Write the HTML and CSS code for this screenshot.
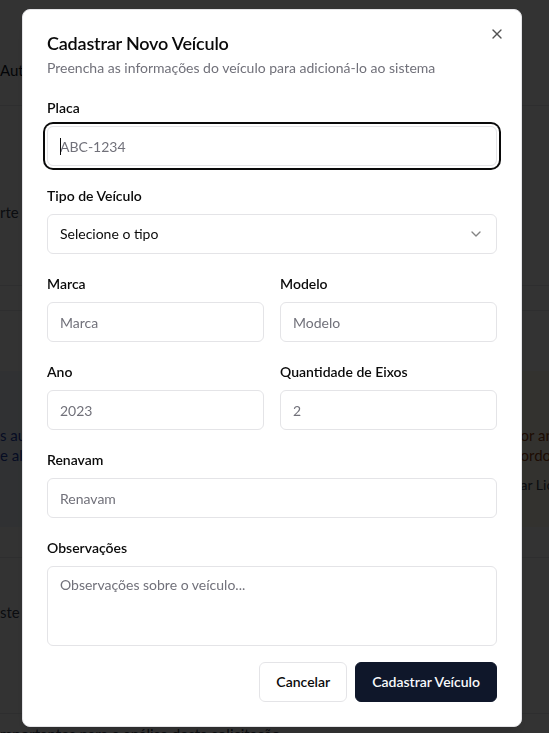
FILE: index.html
```html
<!DOCTYPE html>
<html lang="pt-BR">
<head>
<meta charset="utf-8">
<title>Cadastrar Novo Veículo</title>
<link rel="stylesheet" href="styles.css">
</head>
<body>
<div class="page">
  <div class="bg-top"><span class="bg-title">Autorização Especial de Trânsito</span></div>
  <div class="bg-block"><p class="bg-text">rte de carga indivisível em rodovias federais e estaduais</p></div>
  <div class="bg-strip"></div>
  <div class="bg-alerts">
    <div class="alert alert-blue">
      <p>s autorizações especiais são emitidas pelo órgão</p>
      <p>e alterações no cadastro do veículo</p>
    </div>
    <div class="alert alert-amber">
      <p>or análise técnica</p>
      <p>ordo com as normas</p>
      <p class="alert-link">ar Licença</p>
    </div>
  </div>
  <div class="bg-block2"><p class="bg-text">ste pedido será analisado pela equipe técnica</p></div>
  <div class="bg-foot"><p class="bg-text">mportantes para a análise desta solicitação</p></div>
</div>

<div class="overlay"></div>

<div class="dialog" role="dialog" aria-labelledby="dlg-title">
  <button class="close" type="button" aria-label="Fechar">
    <svg viewBox="0 0 24 24" width="16" height="16" fill="none" stroke="currentColor" stroke-width="2" stroke-linecap="round" stroke-linejoin="round"><path d="M18 6 6 18"/><path d="m6 6 12 12"/></svg>
  </button>
  <div class="dlg-head">
    <h2 id="dlg-title" class="dlg-title">Cadastrar Novo Veículo</h2>
    <p class="dlg-desc">Preencha as informações do veículo para adicioná-lo ao sistema</p>
  </div>
  <form class="form">
    <div class="fields">
      <div class="field">
        <label class="label" for="placa">Placa</label>
        <div class="input-wrap has-caret">
          <input id="placa" class="input is-focus" placeholder="ABC-1234">
        </div>
      </div>
      <div class="field">
        <label class="label">Tipo de Veículo</label>
        <button type="button" class="input select">
          <span>Selecione o tipo</span>
          <svg class="chev" viewBox="0 0 24 24" width="16" height="16" fill="none" stroke="currentColor" stroke-width="2" stroke-linecap="round" stroke-linejoin="round"><path d="m6 9 6 6 6-6"/></svg>
        </button>
      </div>
      <div class="row">
        <div class="field">
          <label class="label" for="marca">Marca</label>
          <input id="marca" class="input" placeholder="Marca">
        </div>
        <div class="field">
          <label class="label" for="modelo">Modelo</label>
          <input id="modelo" class="input" placeholder="Modelo">
        </div>
      </div>
      <div class="row">
        <div class="field">
          <label class="label" for="ano">Ano</label>
          <input id="ano" class="input" placeholder="2023">
        </div>
        <div class="field">
          <label class="label" for="eixos">Quantidade de Eixos</label>
          <input id="eixos" class="input" placeholder="2">
        </div>
      </div>
      <div class="field">
        <label class="label" for="renavam">Renavam</label>
        <input id="renavam" class="input" placeholder="Renavam">
      </div>
      <div class="field">
        <label class="label" for="obs">Observações</label>
        <textarea id="obs" class="input textarea" placeholder="Observações sobre o veículo..."></textarea>
      </div>
    </div>
    <div class="actions">
      <button type="button" class="btn btn-outline">Cancelar</button>
      <button type="button" class="btn btn-primary">Cadastrar Veículo</button>
    </div>
  </form>
</div>
</body>
</html>
```

FILE: styles.css
```css
* { box-sizing: border-box; }

html, body {
  margin: 0;
  height: 100%;
}

body {
  font-family: Lato, "Open Sans", "Noto Sans", sans-serif;
  color: #0a0a0a;
  background: #ffffff;
  overflow: hidden;
}

p { margin: 0; }

/* background page */
.page {
  width: 549px;
  height: 733px;
  overflow: hidden;
  font-size: 15px;
  line-height: 20px;
  color: #111827;
}

.bg-top {
  height: 106px;
  border-bottom: 1px solid #e5e7eb;
  padding-top: 60px;
  white-space: nowrap;
}

.bg-text { white-space: nowrap; color: #374151; }

.bg-block {
  height: 180px;
  border-bottom: 1px solid #e5e7eb;
  padding-top: 96px;
}

.bg-strip {
  height: 25px;
  border-bottom: 1px solid #e5e7eb;
}

.bg-alerts {
  display: grid;
  grid-template-columns: 1fr 1fr;
  gap: 16px;
  padding-top: 60px;
}

.alert {
  height: 156px;
  padding-top: 54px;
  white-space: nowrap;
  overflow: hidden;
}

.alert-blue {
  background: #eff6ff;
  color: #1e40af;
}

.alert-amber {
  background: #fffbeb;
  color: #92400e;
  padding-left: 254px;
  margin-left: -16px;
}

.alert-link {
  margin-top: 10px;
  color: #374151;
  font-size: 14px;
}

.bg-block2 {
  height: 157px;
  border-top: 1px solid #e5e7eb;
  border-bottom: 1px solid #e5e7eb;
  margin-top: 30px;
  padding-top: 44px;
}

.bg-foot {
  padding-top: 10px;
}

.overlay {
  position: fixed;
  inset: 0;
  background: rgba(0, 0, 0, 0.8);
}

/* dialog */
.dialog {
  position: fixed;
  left: 22px;
  top: 9px;
  width: 500px;
  background: #ffffff;
  border: 1px solid #e4e4e7;
  border-radius: 8px;
  padding: 24px;
  display: flex;
  flex-direction: column;
  gap: 20px;
  box-shadow: 0 10px 15px -3px rgba(0,0,0,0.1), 0 4px 6px -4px rgba(0,0,0,0.1);
}

.close {
  position: absolute;
  top: 16px;
  right: 16px;
  width: 16px;
  height: 16px;
  padding: 0;
  border: 0;
  background: none;
  color: #0a0a0a;
  opacity: 0.7;
  display: flex;
}

.dlg-head {
  display: flex;
  flex-direction: column;
  gap: 6px;
}

.dlg-title {
  margin: 0;
  font-size: 18px;
  line-height: 18px;
  font-weight: 600;
  letter-spacing: -0.2px;
}

.dlg-desc {
  font-size: 14px;
  line-height: 20px;
  color: #71717a;
}

.form {
  display: flex;
  flex-direction: column;
}

.fields {
  display: flex;
  flex-direction: column;
  gap: 20px;
}

.row {
  display: grid;
  grid-template-columns: 1fr 1fr;
  gap: 16px;
}

.field {
  display: flex;
  flex-direction: column;
  gap: 8px;
}

.label {
  font-size: 14px;
  line-height: 20px;
  font-weight: 600;
  color: #0a0a0a;
}

.input-wrap { position: relative; }

.has-caret::after {
  content: "";
  position: absolute;
  left: 13px;
  top: 12px;
  width: 1px;
  height: 17px;
  background: #0a0a0a;
}

.input {
  width: 100%;
  height: 40px;
  border: 1px solid #e4e4e7;
  border-radius: 6px;
  padding: 8px 12px;
  font-family: inherit;
  font-size: 14px;
  line-height: 20px;
  color: #0a0a0a;
  background: #ffffff;
  outline: none;
  display: block;
}

.input::placeholder { color: #71717a; }

.input.is-focus,
.input:focus {
  box-shadow: 0 0 0 2px #ffffff, 0 0 0 4px #0a0a0a;
}

.select {
  display: flex;
  align-items: center;
  justify-content: space-between;
  text-align: left;
  cursor: pointer;
}

.chev { opacity: 0.5; flex: none; }

.textarea {
  height: 80px;
  resize: none;
}

.actions {
  display: flex;
  justify-content: flex-end;
  gap: 8px;
  padding-top: 16px;
}

.btn {
  height: 40px;
  padding: 0 16px;
  border-radius: 6px;
  font-family: inherit;
  font-size: 14px;
  font-weight: 600;
  line-height: 20px;
  cursor: pointer;
}

.btn-outline {
  background: #ffffff;
  border: 1px solid #e4e4e7;
  color: #0a0a0a;
}

.btn-primary {
  background: #0f172a;
  border: 1px solid #0f172a;
  color: #f8fafc;
}
```
